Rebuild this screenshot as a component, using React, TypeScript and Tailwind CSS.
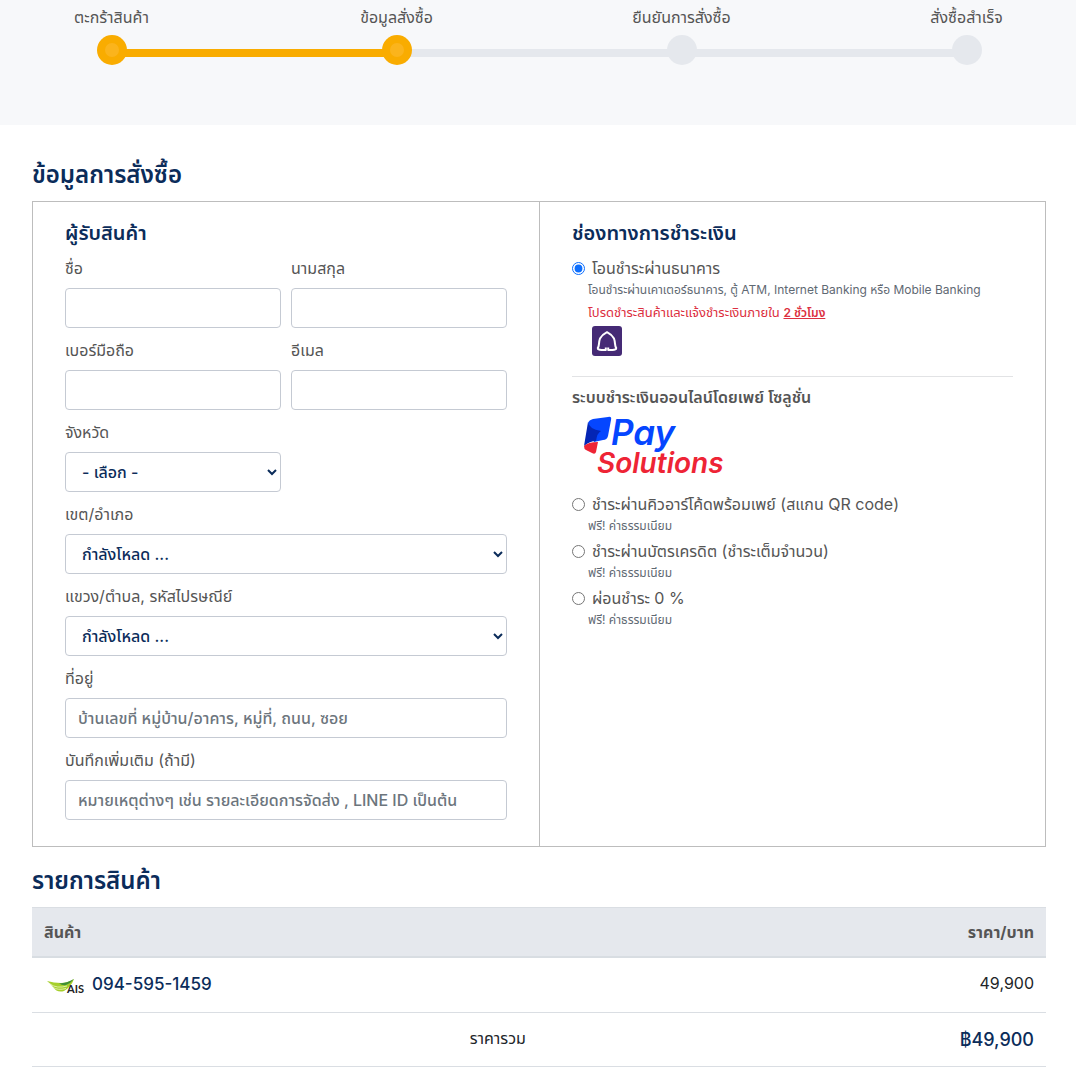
import { type ReactNode } from "react";
import clsx from "clsx";

const STEPS = [
	{ label: "ตะกร้าสินค้า", done: true, lineDone: true },
	{ label: "ข้อมูลสั่งซื้อ", done: true, lineDone: false },
	{ label: "ยืนยันการสั่งซื้อ", done: false, lineDone: false },
	{ label: "สั่งซื้อสำเร็จ", done: false, lineDone: false },
];

const ONLINE_METHODS = [
	{ id: "qr", label: "ชำระผ่านคิวอาร์โค้ดพร้อมเพย์ (สแกน QR code)" },
	{ id: "credit", label: "ชำระผ่านบัตรเครดิต (ชำระเต็มจำนวน)" },
	{ id: "installment", label: "ผ่อนชำระ 0 %" },
];

const CONTROL =
	"block h-10 w-full rounded border border-[#c5cad3] bg-white px-3 font-medium text-[#0b2c5a] placeholder:text-[#6c757d]";

function Stepper() {
	return (
		<header className="h-[125px] overflow-hidden bg-[#f7f8fa] pr-[30px] pl-8">
			<ol className="-mx-[63px] grid grid-cols-4">
				{STEPS.map((step, i) => (
					<li key={step.label} className="relative flex flex-col items-center pt-[5px]">
						<span className="h-[30px] leading-6">{step.label}</span>
						{i < STEPS.length - 1 && (
							<span
								className={clsx(
									"absolute top-[49px] left-1/2 h-2 w-full",
									step.lineDone ? "bg-[#f9ac00]" : "bg-[#e5e8ed]",
								)}
							/>
						)}
						<span
							className={clsx(
								"z-10 flex size-[30px] items-center justify-center rounded-full",
								step.done ? "bg-[#f9ac00]" : "bg-[#e5e8ed]",
							)}
						>
							{step.done && <span className="size-[14px] rounded-full bg-[#fbb41c]" />}
						</span>
					</li>
				))}
			</ol>
		</header>
	);
}

interface FieldProps {
	id: string;
	label: string;
	/** Spans both columns of the form grid */
	wide?: boolean;
	children: ReactNode;
}

function Field({ id, label, wide, children }: FieldProps) {
	return (
		<div className={wide ? "col-span-2" : "col-start-auto"}>
			<label htmlFor={id} className="mb-2 block leading-6">
				{label}
			</label>
			{children}
		</div>
	);
}

function RecipientForm() {
	return (
		<form className="px-8 pt-4 pb-[26px]">
			<h2 className="mb-2 text-xl leading-[30px] font-semibold text-[#0b2c5a]">ผู้รับสินค้า</h2>
			<div className="grid grid-cols-2 gap-[10px]">
				<Field id="firstname" label="ชื่อ">
					<input id="firstname" type="text" className={CONTROL} />
				</Field>
				<Field id="lastname" label="นามสกุล">
					<input id="lastname" type="text" className={CONTROL} />
				</Field>
				<Field id="mobile" label="เบอร์มือถือ">
					<input id="mobile" type="tel" className={CONTROL} />
				</Field>
				<Field id="email" label="อีเมล">
					<input id="email" type="email" className={CONTROL} />
				</Field>
				<Field id="province" label="จังหวัด">
					<select id="province" className={CONTROL}>
						<option>- เลือก -</option>
					</select>
				</Field>
				<Field id="district" label="เขต/อำเภอ" wide>
					<select id="district" className={CONTROL}>
						<option>กำลังโหลด ...</option>
					</select>
				</Field>
				<Field id="subdistrict" label="แขวง/ตำบล, รหัสไปรษณีย์" wide>
					<select id="subdistrict" className={CONTROL}>
						<option>กำลังโหลด ...</option>
					</select>
				</Field>
				<Field id="address" label="ที่อยู่" wide>
					<input
						id="address"
						type="text"
						placeholder="บ้านเลขที่ หมู่บ้าน/อาคาร, หมู่ที่, ถนน, ซอย"
						className={CONTROL}
					/>
				</Field>
				<Field id="note" label="บันทึกเพิ่มเติม (ถ้ามี)" wide>
					<input
						id="note"
						type="text"
						placeholder="หมายเหตุต่างๆ เช่น รายละเอียดการจัดส่ง , LINE ID เป็นต้น"
						className={CONTROL}
					/>
				</Field>
			</div>
		</form>
	);
}

function BankIcon() {
	return (
		<svg viewBox="0 0 30 30" className="ml-5 size-[30px]" role="img" aria-label="SCB">
			<rect width="30" height="30" rx="3" fill="#452a75" />
			<path
				d="M13.800 21.500V24H9.500Q5.600 23.800 5.800 22C7.500 20 6.500 16.500 8 12.500Q10 8.800 15 6.200Q20 8.800 22 12.500C23.500 16.500 22.500 20 24.200 22Q24.400 23.800 20.500 24H16.200V21.500"
				fill="none"
				stroke="#fff"
				strokeWidth="2"
				strokeLinejoin="round"
			/>
		</svg>
	);
}

function PaySolutionsLogo() {
	return (
		<svg
			viewBox="0 0 140 62"
			className="ml-3 h-[62px] w-[140px] overflow-visible"
			role="img"
			aria-label="Pay Solutions"
		>
			<path d="M4 7Q5 4 9 3L24 1Q28 0 27 4L24 20Q23 24 19 24L10 26Z" fill="#0546ff" />
			<path d="M4 6Q5 13 17 15Q13 17 12 25Q6 25 0 30Z" fill="#0425b4" />
			<path d="M0 30Q4 26 14 26L12 36Q11 39 8 37L2 34Q0 33 0 30Z" fill="#ee2435" />
			<text x="27" y="29" fontSize="35" className="font-[Inter] font-semibold italic" fill="#0546ff">
				Pay
			</text>
			<text x="13" y="57" fontSize="28" className="font-[Inter] font-semibold italic" fill="#ee2435">
				Solutions
			</text>
		</svg>
	);
}

interface PaymentOptionProps {
	id: string;
	label: string;
	checked?: boolean;
	children: ReactNode;
}

function PaymentOption({ id, label, checked, children }: PaymentOptionProps) {
	return (
		<div>
			<div className="flex items-center">
				<input id={id} type="radio" name="payment" defaultChecked={checked} className="size-[13px] accent-[#0d6efd]" />
				<label htmlFor={id} className="ml-[7px] leading-6">
					{label}
				</label>
			</div>
			{children}
		</div>
	);
}

function PaymentMethods() {
	return (
		<section className="border-l border-[#bdbdbd] px-8 pt-4">
			<h2 className="mb-2 text-xl leading-[30px] font-semibold text-[#0b2c5a]">ช่องทางการชำระเงิน</h2>
			<PaymentOption id="bank" label="โอนชำระผ่านธนาคาร" checked>
				<p className="pl-4 text-xs leading-5 text-[#5f6973]">
					โอนชำระผ่านเคาเตอร์ธนาคาร, ตู้ ATM, Internet Banking หรือ Mobile Banking
				</p>
				<p className="mt-[2px] mb-1 pl-4 text-[13px] leading-5 text-[#dc2f40]">
					โปรดชำระสินค้าและแจ้งชำระเงินภายใน <span className="text-xs font-semibold underline">2 ชั่วโมง</span>
				</p>
				<BankIcon />
			</PaymentOption>
			<hr className="mt-5 mb-2 border-[#e2e3e5]" />
			<h3 className="leading-6 font-semibold">ระบบชำระเงินออนไลน์โดยเพย์ โซลูชั่น</h3>
			<div className="mt-[7px] mb-[14px]">
				<PaySolutionsLogo />
			</div>
			<div className="flex flex-col gap-[3px]">
				{ONLINE_METHODS.map((m) => (
					<PaymentOption key={m.id} id={m.id} label={m.label}>
						<p className="pl-4 text-xs leading-5 text-[#5f6973]">ฟรี! ค่าธรรมเนียม</p>
					</PaymentOption>
				))}
			</div>
		</section>
	);
}

function AisLogo() {
	return (
		<svg viewBox="0 0 40 24" className="h-6 w-10 overflow-visible" role="img" aria-label="AIS">
			<path d="M-1 8Q6 10 13 10Q20 10 26 6Q23 14 16 18Q9 20 5 14Q3 11 -1 8Z" fill="#a6cf2c" />
			<path d="M26 6Q19 10 11 10.500Q15 13 18 12Q23 10 26 6Z" fill="#3f8f35" />
			<path d="M2 11Q9 16 19 13M5 14.500Q10 17.500 18 15.500" fill="none" stroke="#eef6c8" strokeWidth="0.8" />
			<text x="19" y="20" fontSize="11" className="font-[Lato] font-bold" fill="#222">
				AIS
			</text>
		</svg>
	);
}

function OrderTable() {
	return (
		<table className="w-full border-collapse">
			<thead className="bg-[#e5e8ed]">
				<tr className="h-[49px] border-t border-b-2 border-t-[#dadee3] border-b-[#d8dde2]">
					<th className="px-3 text-left font-bold">สินค้า</th>
					<th className="px-3 text-right font-bold">ราคา/บาท</th>
				</tr>
			</thead>
			<tbody className="text-[#212529]">
				<tr className="h-14 border-b border-[#dadee3]">
					<td className="px-3">
						<div className="flex items-center gap-1 pl-1">
							<AisLogo />
							<span className="text-[17px] font-medium text-[#0b2c5a]">094-595-1459</span>
						</div>
					</td>
					<td className="px-3 pb-1 text-right">49,900</td>
				</tr>
				<tr className="h-[54px] border-b border-[#dadee3]">
					<td className="w-[92%] pr-3 pb-1 pl-7 text-center">ราคารวม</td>
					<td className="px-3 text-right text-lg font-medium text-[#0b2c5a]">฿49,900</td>
				</tr>
			</tbody>
		</table>
	);
}

export default function App() {
	return (
		<div className="bg-white font-[Inter,'Noto_Sans_Thai','Noto_Sans',sans-serif] text-base text-[#555]">
			<Stepper />
			<main className="pt-8 pr-[30px] pb-2 pl-8">
				<h1 className="mb-2 text-2xl leading-9 font-semibold text-[#0b2c5a]">ข้อมูลการสั่งซื้อ</h1>
				<div className="grid grid-cols-2 border border-[#bdbdbd]">
					<RecipientForm />
					<PaymentMethods />
				</div>
				<h1 className="mt-4 mb-2 text-2xl leading-9 font-semibold text-[#0b2c5a]">รายการสินค้า</h1>
				<OrderTable />
			</main>
		</div>
	);
}
